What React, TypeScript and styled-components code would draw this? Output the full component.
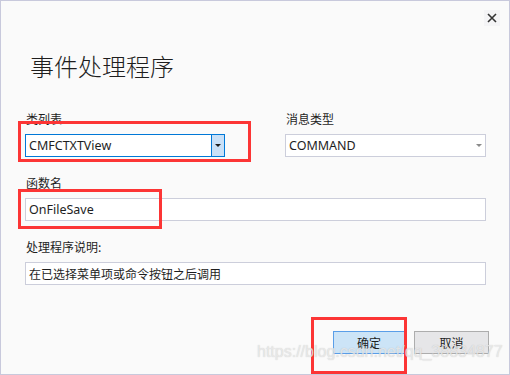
import React from "react";
import styled, { createGlobalStyle } from "styled-components";

const GlobalStyle = createGlobalStyle`
  html, body {
    margin: 0;
    padding: 0;
    background: #fafafa;
  }
  * {
    box-sizing: border-box;
  }
`;

const Window = styled.div`
  position: relative;
  display: flex;
  flex-direction: column;
  width: 510px;
  height: 375px;
  border: 1px solid #c8c9dc;
  background: #fafafa;
  color: #1e1e1e;
  font-family: "Noto Sans", "Noto Sans CJK SC", sans-serif;
  overflow: hidden;
`;

const TitleBar = styled.div`
  display: flex;
  justify-content: flex-end;
  padding: 9px 9px 0 0;
`;

const CloseButton = styled.button`
  display: flex;
  align-items: center;
  justify-content: center;
  width: 16px;
  height: 16px;
  padding: 0;
  border: none;
  background: #f4f4f6;
  cursor: pointer;
`;

const Body = styled.div`
  display: flex;
  flex-direction: column;
  padding: 0 23px 0 24px;
`;

const Heading = styled.h1`
  margin: 24px 0 28px 5px;
  font-family: "Noto Sans CJK SC", sans-serif;
  font-size: 24px;
  font-weight: 300;
  line-height: 32px;
  color: #1e1e1e;
`;

const Form = styled.div`
  display: flex;
  flex-direction: column;
  gap: 17px;
`;

const Row = styled.div`
  display: grid;
  grid-template-columns: 200px 201px;
  column-gap: 60px;
`;

const Field = styled.div`
  display: flex;
  flex-direction: column;
  gap: 6px;
`;

const Label = styled.label`
  font-family: "Noto Sans CJK SC", sans-serif;
  font-size: 12px;
  line-height: 18px;
  padding-left: 1px;
`;

const Box = styled.div<{ $focused?: boolean; $cjk?: boolean }>`
  position: relative;
  display: flex;
  align-items: center;
  height: 23px;
  padding-left: 3px;
  border: 1px solid ${(p) => (p.$focused ? "#0078d7" : "#cccedb")};
  background: #ffffff;
  font-family: ${(p) => (p.$cjk ? '"Noto Sans CJK SC", sans-serif' : '"Noto Sans", sans-serif')};
  font-size: ${(p) => (p.$cjk ? "12px" : "12.5px")};
  color: #1e1e1e;
  white-space: nowrap;
`;

const DropButton = styled.div<{ $active?: boolean }>`
  display: flex;
  align-items: center;
  justify-content: center;
  width: 13px;
  height: 100%;
  margin-left: auto;
  border-left: 1px solid ${(p) => (p.$active ? "#0078d7" : "transparent")};
  background: ${(p) => (p.$active ? "#c9e0f7" : "transparent")};
`;

const Arrow = styled.span<{ $dark?: boolean }>`
  width: 0;
  height: 0;
  border-left: 3px solid transparent;
  border-right: 3px solid transparent;
  border-top: 3px solid ${(p) => (p.$dark ? "#1e1e1e" : "#8a8a8a")};
`;

const Footer = styled.div`
  display: flex;
  justify-content: flex-end;
  gap: 9px;
  margin-top: auto;
  padding: 0 20px 20px 0;
`;

const Button = styled.button<{ $primary?: boolean; $w: number }>`
  width: ${(p) => p.$w}px;
  height: 23px;
  padding: 0;
  border: 1px solid ${(p) => (p.$primary ? "#5a9ee8" : "#adadad")};
  background: ${(p) => (p.$primary ? "#cce4f7" : "#e6e6e8")};
  font-family: "Noto Sans CJK SC", sans-serif;
  font-size: 12px;
  color: #1e1e1e;
  cursor: pointer;
`;

// red annotation frames drawn over the dialog
const Marker = styled.div<{ $x: number; $y: number; $w: number; $h: number }>`
  position: absolute;
  left: ${(p) => p.$x}px;
  top: ${(p) => p.$y}px;
  width: ${(p) => p.$w}px;
  height: ${(p) => p.$h}px;
  border: 3px solid #fc3535;
  pointer-events: none;
`;

const Watermark = styled.div`
  position: absolute;
  left: 256px;
  top: 342px;
  font-family: "Liberation Sans", Arial, sans-serif;
  font-size: 16px;
  color: rgba(240, 240, 240, 0.75);
  text-shadow: 0 0 1px rgba(140, 140, 140, 0.45);
  pointer-events: none;
  white-space: nowrap;
`;

export default function App() {
  return (
    <Window>
      <GlobalStyle />
      <TitleBar>
        <CloseButton aria-label="close">
          <svg width="10" height="10" viewBox="0 0 10 10">
            <path d="M1 1L9 9M9 1L1 9" stroke="#333" strokeWidth="1.6" />
          </svg>
        </CloseButton>
      </TitleBar>
      <Body>
        <Heading>事件处理程序</Heading>
        <Form>
          <Row>
            <Field>
              <Label>类列表</Label>
              <Box $focused>
                CMFCTXTView
                <DropButton $active>
                  <Arrow $dark />
                </DropButton>
              </Box>
            </Field>
            <Field>
              <Label>消息类型</Label>
              <Box>
                COMMAND
                <DropButton>
                  <Arrow />
                </DropButton>
              </Box>
            </Field>
          </Row>
          <Field>
            <Label>函数名</Label>
            <Box>OnFileSave</Box>
          </Field>
          <Field>
            <Label>处理程序说明:</Label>
            <Box $cjk>在已选择菜单项或命令按钮之后调用</Box>
          </Field>
        </Form>
      </Body>
      <Footer>
        <Button $primary $w={72}>确定</Button>
        <Button $w={75}>取消</Button>
      </Footer>
      <Marker $x={17} $y={120} $w={233} $h={41} />
      <Marker $x={17} $y={188} $w={144} $h={40} />
      <Marker $x={310} $y={316} $w={96} $h={57} />
      <Watermark>https://blog.csdn.net/qq_38834877</Watermark>
    </Window>
  );
}
